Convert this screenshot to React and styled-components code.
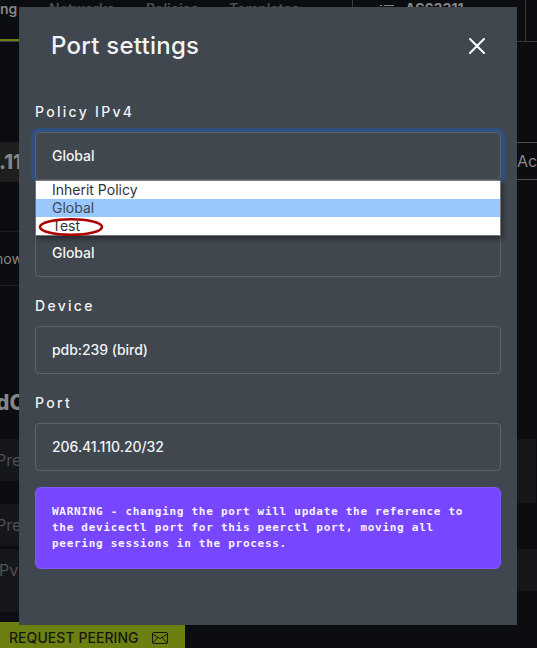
import React from "react";
import styled, { createGlobalStyle } from "styled-components";

const GlobalStyle = createGlobalStyle`
  * { box-sizing: border-box; }
  body {
    margin: 0;
    background: #0c0d11;
    color: #868686;
    font-family: Inter, sans-serif;
    overflow: hidden;
  }
`;

const Page = styled.div`
  position: relative;
  height: 648px;
  overflow: hidden;
  background: #0c0d11;
`;

const NavBar = styled.header`
  display: flex;
  height: 42px;
  border-bottom: 1px solid #38393c;
`;

const NavTabs = styled.nav`
  display: flex;
  flex: 0 0 353px;
  border-right: 1px solid #38393c;
`;

const NavTab = styled.span`
  flex: 0 0 ${(p) => p.$width}px;
  height: 41px;
  font-size: 14px;
  font-weight: 600;
  line-height: 17px;
  color: ${(p) => (p.$active ? "#868686" : "#4a4b4d")};
  border-bottom: ${(p) => (p.$active ? "2px solid #6b8010" : "0")};
`;

const Network = styled.div`
  display: flex;
  gap: 11px;
  flex: 0 0 173px;
  padding-left: 27px;
  font-size: 14px;
  font-weight: 700;
  line-height: 18px;
  border-right: 1px solid #38393c;
`;

const Columns = styled.div`
  display: flex;
  justify-content: space-between;
  align-items: flex-start;
  height: ${(p) => p.$height}px;
  margin-top: ${(p) => p.$gap || 0}px;
`;

const AddressTab = styled.div`
  width: 150px;
  height: 40px;
  background: #1e1e1e;
  font-size: 20px;
  font-weight: 800;
  line-height: 40px;
  text-indent: -1px;
`;

const ActionTab = styled.div`
  width: 70px;
  height: 38px;
  padding-left: 50px;
  border: solid #4d4e50;
  border-width: 1px 0;
  font-size: 16px;
  line-height: 37px;
  white-space: nowrap;
`;

const FilterBar = styled.div`
  width: 200px;
  height: 55px;
  border: solid #1e1f23;
  border-width: 1px 0;
  font-size: 14px;
  line-height: 54px;
  text-indent: -5px;
`;

const SectionTitle = styled.h3`
  margin: 0;
  height: 153px;
  padding-top: 103px;
  font-size: 21px;
  font-weight: 800;
  line-height: 27px;
  text-indent: -4px;
`;

const FieldPanel = styled.div`
  width: 200px;
  height: ${(p) => p.$height}px;
  background: #16171b;
  color: #4f5053;
  font-size: 16px;
  line-height: 42px;
  text-indent: ${(p) => p.$indent}px;
`;

const SidePanel = styled.div`
  width: 100px;
  height: ${(p) => p.$height}px;
  margin-right: ${(p) => p.$inset || 0}px;
  background: #16171b;
`;

const RequestButton = styled.button`
  display: flex;
  align-items: center;
  gap: 13px;
  width: 185px;
  height: 32px;
  margin-top: 10px;
  padding: 0 0 0 9px;
  border: 0;
  background: #6b8010;
  color: #17190f;
  font: 500 14px/32px Inter, sans-serif;
  letter-spacing: 0.05px;
  white-space: nowrap;
`;

const Modal = styled.section`
  position: absolute;
  top: 7px;
  left: 19px;
  width: 498px;
  height: 618px;
  padding: 0 16px;
  background: #40474f;
  color: #f2f3f4;
`;

const ModalHeader = styled.div`
  display: flex;
  align-items: center;
  justify-content: space-between;
  height: 78px;
  padding: 0 16px;
`;

const Title = styled.h2`
  margin: 0;
  font-size: 24px;
  font-weight: 500;
  line-height: 30px;
  letter-spacing: 0.25px;
`;

const CloseButton = styled.button`
  display: flex;
  padding: 0;
  border: 0;
  background: none;
  color: #fff;
`;

const Form = styled.div`
  display: flex;
  flex-direction: column;
  gap: 16px;
  padding-top: 14px;
`;

const Field = styled.div`
  position: relative;
  height: 81px;
`;

const Label = styled.label`
  display: block;
  height: 33px;
  font-size: 14px;
  font-weight: 500;
  line-height: 26px;
  letter-spacing: 2.3px;
`;

const SelectBox = styled.div`
  height: 48px;
  padding: 0 16px;
  border: 1px solid #5b6269;
  border-radius: 4px;
  font-size: 14px;
  font-weight: 500;
  line-height: 46px;
  letter-spacing: -0.05px;
  box-shadow: ${(p) => (p.$focused ? "0 0 0 4px #305080" : "none")};
`;

const Menu = styled.ul`
  position: absolute;
  top: 81px;
  left: 0;
  z-index: 1;
  width: 466px;
  height: 56px;
  margin: 0;
  padding: 0;
  list-style: none;
  background: #fff;
  border: 1px solid #767676;
  box-shadow: 2px 3px 5px rgba(0, 0, 0, 0.4);
`;

const Option = styled.li`
  height: 18px;
  padding-left: 16px;
  background: ${(p) => (p.$selected ? "#99c8ff" : "#fff")};
  color: ${(p) => (p.$selected ? "#40474f" : "#303238")};
  font-size: 14px;
  line-height: 18px;
`;

const Marker = styled.svg`
  position: absolute;
  top: 36px;
  left: 2px;
`;

const Warning = styled.p`
  margin: 0;
  height: 82px;
  padding: 16px;
  border: 1px solid #8458ff;
  border-radius: 6px;
  background: #7747ff;
  color: #f6f2ff;
  font: 700 11px/16px "DejaVu Sans Mono", monospace;
  letter-spacing: 0.72px;
  white-space: pre;
`;

const CloseIcon = () => (
  <svg width="16" height="16" viewBox="0 0 16 16" fill="none" stroke="currentColor" strokeWidth="2" strokeLinecap="round">
    <path d="M1 1 15 15M15 1 1 15" />
  </svg>
);

const MailIcon = () => (
  <svg width="16" height="12" viewBox="0 0 16 12" fill="none" stroke="currentColor">
    <rect x=".5" y=".5" width="15" height="11" rx="1.5" />
    <path d="M.8 2.3 8 6.6 15.2 2.3M.8 10.7 6 5.6M15.2 10.7 10 5.6" />
  </svg>
);

const ListIcon = () => (
  <svg width="14" height="14" viewBox="0 0 14 14" stroke="currentColor">
    <path d="M0 5.5h2M4 5.5h10M0 9.5h2M4 9.5h10" />
  </svg>
);

const OPTIONS = ["Inherit Policy", "Global", "Test"];

export default function App() {
  return (
    <>
      <GlobalStyle />
      <Page>
        <NavBar>
          <NavTabs>
            <NavTab $width={49} $active>ng</NavTab>
            <NavTab $width={97}>Networks</NavTab>
            <NavTab $width={83}>Policies</NavTab>
            <NavTab $width={80}>Templates</NavTab>
          </NavTabs>
          <Network>
            <ListIcon />
            AS63311
          </Network>
        </NavBar>
        <Columns $height={40} $gap={100}>
          <AddressTab>.11</AddressTab>
          <ActionTab>Ac</ActionTab>
        </Columns>
        <Columns $height={55} $gap={49}>
          <FilterBar>now</FilterBar>
        </Columns>
        <SectionTitle>dC</SectionTitle>
        <Columns $height={65}>
          <FieldPanel $height={42} $indent={-4}>Pre</FieldPanel>
          <SidePanel $height={64} $inset={1} />
        </Columns>
        <Columns $height={45}>
          <FieldPanel $height={42} $indent={-4}>Pre</FieldPanel>
        </Columns>
        <Columns $height={63}>
          <FieldPanel $height={63} $indent={-1}>Pv</FieldPanel>
          <SidePanel $height={42} />
        </Columns>
        <RequestButton>
          REQUEST PEERING
          <MailIcon />
        </RequestButton>

        <Modal>
          <ModalHeader>
            <Title>Port settings</Title>
            <CloseButton aria-label="Close"><CloseIcon /></CloseButton>
          </ModalHeader>
          <Form>
            <Field>
              <Label>Policy IPv4</Label>
              <SelectBox $focused>Global</SelectBox>
              <Menu>
                {OPTIONS.map((name) => (
                  <Option key={name} $selected={name === "Global"}>{name}</Option>
                ))}
                <Marker width="66" height="20" viewBox="0 0 66 20" fill="none" stroke="#ad0000" strokeWidth="2.6">
                  <ellipse cx="33" cy="10" rx="31" ry="7.8" />
                </Marker>
              </Menu>
            </Field>
            <Field>
              <Label />
              <SelectBox>Global</SelectBox>
            </Field>
            <Field>
              <Label>Device</Label>
              <SelectBox>pdb:239 (bird)</SelectBox>
            </Field>
            <Field>
              <Label>Port</Label>
              <SelectBox>206.41.110.20/32</SelectBox>
            </Field>
            <Warning>{"WARNING - changing the port will update the reference to\nthe devicectl port for this peerctl port, moving all\npeering sessions in the process."}</Warning>
          </Form>
        </Modal>
      </Page>
    </>
  );
}
